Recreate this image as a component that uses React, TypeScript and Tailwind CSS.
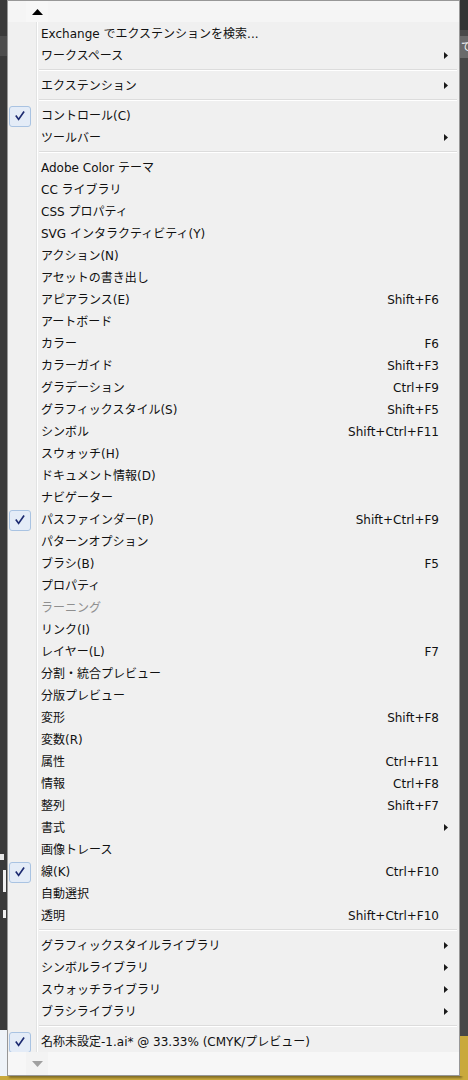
import React from "react";

type Item =
  | { kind: "sep" }
  | {
      kind: "item";
      label: string;
      shortcut?: string;
      sub?: boolean;
      checked?: boolean;
      disabled?: boolean;
    };

const S: Item = { kind: "sep" };
const I = (
  label: string,
  opts: { shortcut?: string; sub?: boolean; checked?: boolean; disabled?: boolean } = {}
): Item => ({ kind: "item", label, ...opts });

const items: Item[] = [
  I("Exchange でエクステンションを検索..."),
  I("ワークスペース", { sub: true }),
  S,
  I("エクステンション", { sub: true }),
  S,
  I("コントロール(C)", { checked: true }),
  I("ツールバー", { sub: true }),
  S,
  I("Adobe Color テーマ"),
  I("CC ライブラリ"),
  I("CSS プロパティ"),
  I("SVG インタラクティビティ(Y)"),
  I("アクション(N)"),
  I("アセットの書き出し"),
  I("アピアランス(E)", { shortcut: "Shift+F6" }),
  I("アートボード"),
  I("カラー", { shortcut: "F6" }),
  I("カラーガイド", { shortcut: "Shift+F3" }),
  I("グラデーション", { shortcut: "Ctrl+F9" }),
  I("グラフィックスタイル(S)", { shortcut: "Shift+F5" }),
  I("シンボル", { shortcut: "Shift+Ctrl+F11" }),
  I("スウォッチ(H)"),
  I("ドキュメント情報(D)"),
  I("ナビゲーター"),
  I("パスファインダー(P)", { shortcut: "Shift+Ctrl+F9", checked: true }),
  I("パターンオプション"),
  I("ブラシ(B)", { shortcut: "F5" }),
  I("プロパティ"),
  I("ラーニング", { disabled: true }),
  I("リンク(I)"),
  I("レイヤー(L)", { shortcut: "F7" }),
  I("分割・統合プレビュー"),
  I("分版プレビュー"),
  I("変形", { shortcut: "Shift+F8" }),
  I("変数(R)"),
  I("属性", { shortcut: "Ctrl+F11" }),
  I("情報", { shortcut: "Ctrl+F8" }),
  I("整列", { shortcut: "Shift+F7" }),
  I("書式", { sub: true }),
  I("画像トレース"),
  I("線(K)", { shortcut: "Ctrl+F10", checked: true }),
  I("自動選択"),
  I("透明", { shortcut: "Shift+Ctrl+F10" }),
  S,
  I("グラフィックスタイルライブラリ", { sub: true }),
  I("シンボルライブラリ", { sub: true }),
  I("スウォッチライブラリ", { sub: true }),
  I("ブラシライブラリ", { sub: true }),
  S,
  I("名称未設定-1.ai* @ 33.33% (CMYK/プレビュー)", { checked: true }),
];

function Gutter({ children }: { children?: React.ReactNode }) {
  return (
    <div className="flex h-full shrink-0">
      <div className="w-[28px] h-full flex items-center">{children}</div>
      <div className="w-px h-full bg-[#e2e3e3]" />
      <div className="w-px h-full bg-white" />
    </div>
  );
}

function Check() {
  return (
    <div className="ml-px w-[22px] h-[21px] mt-[2px] rounded-[3px] border border-[#a9c3e2] bg-[#e4ecf7] flex items-center justify-center">
      <svg width="10" height="10" viewBox="0 0 10 10">
        <path
          d="M1.3 5.2 L3.6 8.4 L8.6 1.2"
          fill="none"
          stroke="#1c2a70"
          strokeWidth="1.7"
          strokeLinecap="square"
        />
      </svg>
    </div>
  );
}

function Row({ item }: { item: Extract<Item, { kind: "item" }> }) {
  return (
    <div className="flex h-[22px] items-stretch">
      <Gutter>{item.checked ? <Check /> : null}</Gutter>
      <div
        className={`flex-1 flex items-center pl-[3px] pt-[2px] whitespace-nowrap ${
          item.disabled ? "text-[#8f8f8f]" : "text-[#111111]"
        }`}
      >
        {item.label}
      </div>
      {item.shortcut ? (
        <div className="flex items-center pt-[2px] whitespace-nowrap text-[#111111]">{item.shortcut}</div>
      ) : null}
      <div className="w-[20px] shrink-0 flex items-center pl-[5px]">
        {item.sub ? (
          <svg width="4" height="7" viewBox="0 0 4 7">
            <path d="M0 0 L4 3.5 L0 7 Z" fill="#1a1a1a" />
          </svg>
        ) : null}
      </div>
    </div>
  );
}

function Sep() {
  return (
    <div className="flex h-[8px] items-stretch">
      <Gutter />
      <div className="flex-1 flex flex-col justify-center pl-px pr-[2px]">
        <div className="h-px bg-[#dcdcdc]" />
        <div className="h-px bg-white" />
      </div>
    </div>
  );
}

export default function App() {
  return (
    <div className="w-[468px] h-[1080px] overflow-hidden bg-[#c9a93c] flex flex-col font-['DejaVu_Sans','Noto_Sans_CJK_JP',sans-serif] text-[12px] leading-none">
      <div className="flex h-[1076px] shrink-0">
        {/* left strip */}
        <div className="w-[7px] shrink-0 flex flex-col bg-[#3a3a3a]">
          <div className="h-[36px] shrink-0" />
          <div className="h-[20px] shrink-0 bg-[#4d4d4d]" />
          <div className="h-[798px] shrink-0" />
          <div className="h-[6px] shrink-0 w-[4px] bg-[#e8e8e8]" />
          <div className="h-[10px] shrink-0" />
          <div className="h-[22px] shrink-0 w-[3px] ml-[3px] bg-[#f0f0f0]" />
          <div className="h-[18px] shrink-0" />
          <div className="h-[8px] shrink-0 w-[3px] ml-[3px] bg-[#f0f0f0]" />
          <div className="flex-1" />
          <div className="h-[46px] shrink-0 bg-[#eef3f8]" />
        </div>
        {/* menu */}
        <div className="w-[453px] shrink-0 flex flex-col bg-[#f0f0f0] border border-[#979797] shadow-[2px_2px_2px_rgba(0,0,0,0.35)]">
          <div className="h-[21px] shrink-0 bg-[#f5f5f5] flex">
            <div className="ml-[18px] w-[22px] h-full flex items-center justify-center bg-[#f7f7f7]">
              <svg width="11" height="6" viewBox="0 0 11 6">
                <path d="M0 6 L5.5 0 L11 6 Z" fill="#000" />
              </svg>
            </div>
          </div>
          {items.map((it, i) =>
            it.kind === "sep" ? <Sep key={i} /> : <Row key={i} item={it} />
          )}
          <div className="flex-1 bg-[#f7f7f7] flex">
            <div className="ml-[18px] w-[22px] h-full flex items-center justify-center bg-[#f3f3f3]">
              <svg width="11" height="6" viewBox="0 0 11 6">
                <path d="M0 0 L11 0 L5.5 6 Z" fill="#a0a0a0" />
              </svg>
            </div>
          </div>
        </div>
        {/* right strip */}
        <div className="flex-1 min-w-0 flex flex-col bg-[#3d3d3d]">
          <div className="h-[30px] shrink-0 bg-[#333333]" />
          <div className="h-[6px] shrink-0 bg-[#4a4a4a]" />
          <div className="h-[22px] shrink-0 bg-[#6a6a6a] text-white text-[10px] flex items-center pl-[1px] overflow-hidden">
            て
          </div>
          <div className="flex-1 bg-[#474747]" />
          <div className="h-[40px] shrink-0 bg-[#c9a93c]" />
        </div>
      </div>
    </div>
  );
}
